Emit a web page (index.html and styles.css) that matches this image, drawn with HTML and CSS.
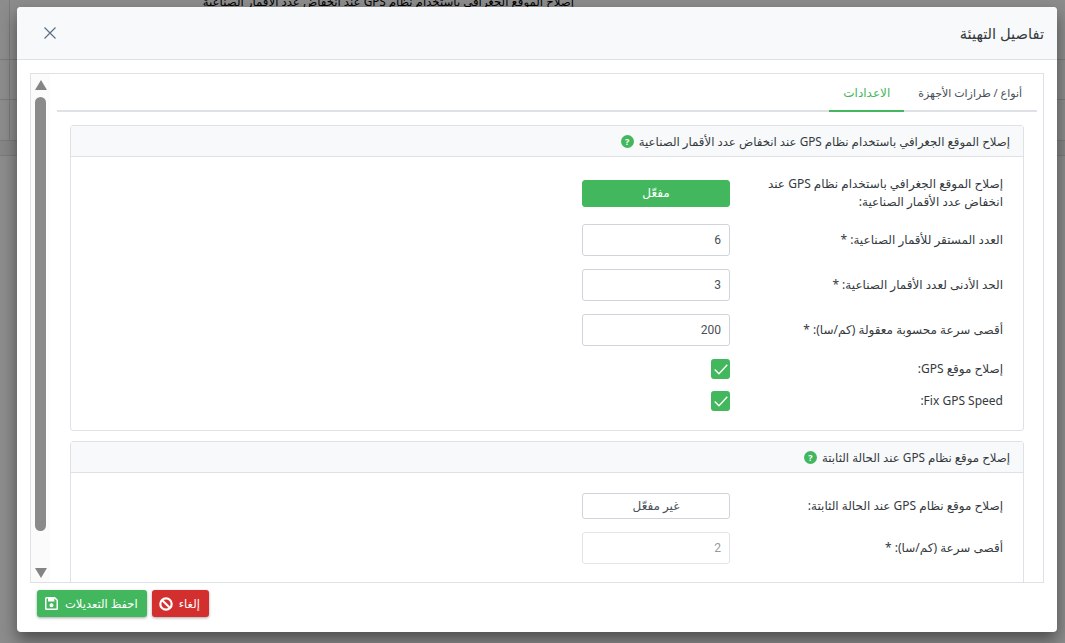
FILE: index.html
```html
<!DOCTYPE html>
<html lang="ar" dir="rtl">

<head>
    <meta charset="UTF-8">
    <title>تفاصيل التهيئة</title>
    <link rel="stylesheet" href="styles.css">
</head>

<body>
    <!-- الصفحة خلف النافذة -->
    <div class="page-behind">
        <div class="behind-row behind-first">
            <span class="behind-text">إصلاح الموقع الجغرافي باستخدام نظام GPS عند انخفاض عدد الأقمار الصناعية</span>
        </div>
        <div class="behind-row behind-second"></div>
        <div class="behind-row behind-third"></div>
        <div class="behind-row behind-fourth"></div>
    </div>
    <div class="overlay"></div>

    <div class="modal">
        <div class="modal-header">
            <span class="modal-title">تفاصيل التهيئة</span>
            <svg class="close-icon" width="12" height="12" viewBox="0 0 12 12"><path d="M.5 .5L11.500 11.500M11.500 .5L.5 11.500" stroke="#5b7085" stroke-width="1.200" fill="none"/></svg>
        </div>
        <div class="modal-body">
            <div class="frame">
                <div class="frame-content">
                    <div class="tabs">
                        <span class="tab">أنواع / طرازات الأجهزة</span>
                        <span class="tab tab-active">الاعدادات</span>
                    </div>

                    <div class="panel">
                        <div class="panel-head">
                            <span>إصلاح الموقع الجغرافي باستخدام نظام GPS عند انخفاض عدد الأقمار الصناعية</span>
                            <span class="help">?</span>
                        </div>
                        <div class="panel-body">
                            <div class="row">
                                <label class="row-label">إصلاح الموقع الجغرافي باستخدام نظام GPS عند انخفاض عدد الأقمار الصناعية:</label>
                                <div class="btn-toggle on">مفعّل</div>
                            </div>
                            <div class="row">
                                <label class="row-label">العدد المستقر للأقمار الصناعية: *</label>
                                <div class="field">6</div>
                            </div>
                            <div class="row">
                                <label class="row-label">الحد الأدنى لعدد الأقمار الصناعية: *</label>
                                <div class="field">3</div>
                            </div>
                            <div class="row">
                                <label class="row-label">أقصى سرعة محسوبة معقولة (كم/سا): *</label>
                                <div class="field">200</div>
                            </div>
                            <div class="row row-check">
                                <label class="row-label">إصلاح موقع GPS:</label>
                                <div class="check-wrap"><span class="check"><svg width="14" height="11" viewBox="0 0 14 11"><path d="M.7 5.500L5 9.800L13.300 .8" stroke="#fff" stroke-width="1.300" fill="none"/></svg></span></div>
                            </div>
                            <div class="row row-check">
                                <label class="row-label">Fix GPS Speed:</label>
                                <div class="check-wrap"><span class="check"><svg width="14" height="11" viewBox="0 0 14 11"><path d="M.7 5.500L5 9.800L13.300 .8" stroke="#fff" stroke-width="1.300" fill="none"/></svg></span></div>
                            </div>
                        </div>
                    </div>

                    <div class="panel panel-second">
                        <div class="panel-head">
                            <span>إصلاح موقع نظام GPS عند الحالة الثابتة</span>
                            <span class="help">?</span>
                        </div>
                        <div class="panel-body">
                            <div class="row">
                                <label class="row-label">إصلاح موقع نظام GPS عند الحالة الثابتة:</label>
                                <div class="btn-toggle off">غير مفعّل</div>
                            </div>
                            <div class="row">
                                <label class="row-label">أقصى سرعة (كم/سا): *</label>
                                <div class="field disabled">2</div>
                            </div>
                        </div>
                    </div>
                </div>

                <!-- شريط التمرير -->
                <div class="scrollbar">
                    <span class="arrow-up"></span>
                    <span class="thumb"></span>
                    <span class="arrow-down"></span>
                </div>
            </div>
        </div>
        <div class="modal-footer">
            <button class="btn btn-red">
                إلغاء
                <svg width="14" height="14" viewBox="0 0 14 14"><circle cx="7" cy="7" r="5.700" stroke="#fff" stroke-width="2.200" fill="none"/><path d="M3 3L11 11" stroke="#fff" stroke-width="2.200"/></svg>
            </button>
            <button class="btn btn-green">
                احفظ التعديلات
                <svg width="13" height="13" viewBox="0 0 13 13"><path fill-rule="evenodd" fill="#fff" d="M1.500 0H10L13 3V11.500A1.500 1.500 0 0 1 11.500 13H1.500A1.500 1.500 0 0 1 0 11.500V1.500A1.500 1.500 0 0 1 1.500 0ZM1.500 1.500V11.500H11.500V3.600L9.400 1.500V4.500H3V1.500ZM6.500 6.200A2 2 0 1 0 6.500 10.200A2 2 0 1 0 6.500 6.200Z"/></svg>
            </button>
        </div>
    </div>
</body>

</html>
```

FILE: styles.css
```css
* {
    box-sizing: border-box;
}

html,
body {
    height: 100%;
    margin: 0;
}

body {
    position: relative;
    overflow: hidden;
    background-color: #fff;
    font-family: "Noto Sans", "DejaVu Sans", sans-serif;
    font-size: 12px;
    color: #343a40;
}

.page-behind {
    height: 100%;
    background: linear-gradient(#dedede, #dedede) 9px 0 / 1px 147px no-repeat;
}

.behind-row {
    border-bottom: 1px solid #dedede;
}

.behind-first {
    height: 67px;
    padding-right: 491px;
}

.behind-second {
    height: 40px;
}

.behind-third {
    height: 41px;
}

.behind-fourth {
    height: 15px;
    background-color: #f4f4f4;
}

.behind-text {
    display: block;
    margin-top: -7px;
    font-size: 11.750px;
    color: #000;
}

.overlay {
    position: absolute;
    top: 0;
    left: 0;
    width: 100%;
    height: 100%;
    background-color: rgba(0, 0, 0, .45);
}

.modal {
    position: absolute;
    top: 7px;
    left: 17px;
    width: 1040px;
    height: 625px;
    display: flex;
    flex-direction: column;
    background-color: #fff;
    border-radius: 4px;
    box-shadow: 0 8px 16px rgba(0, 0, 0, .45);
}

.modal-header {
    height: 53px;
    flex-shrink: 0;
    display: flex;
    align-items: center;
    justify-content: space-between;
    padding: 0 13px 0 27px;
    background-color: #f8f9fa;
    border-bottom: 1px solid #dee2e6;
    border-radius: 4px 4px 0 0;
}

.modal-title {
    font-size: 14.700px;
}

.modal-body {
    height: 523px;
    padding: 13px 13px 0;
}

.frame {
    display: flex;
    height: 510px;
    overflow: hidden;
    border: 1px solid #dee2e6;
}

.frame-content {
    flex: 1;
    padding: 0 6px 0 7px;
    overflow: hidden;
}

.tabs {
    display: flex;
    height: 38px;
    margin-bottom: 13px;
    border-bottom: 2px solid #dee2e6;
}

.tab {
    padding: 11px 15px 0 14px;
    font-size: 11px;
    color: #495057;
}

.tab-active {
    height: 38px;
    padding: 10px 14px 0;
    font-size: 12px;
    color: #43b75d;
    border-bottom: 2px solid #43b75d;
}

.panel {
    margin: 0 13px 10px;
    border: 1px solid #dee2e6;
    border-radius: 3px;
}

.panel-head {
    height: 31px;
    display: flex;
    align-items: center;
    gap: 5px;
    padding: 0 13px;
    font-size: 11.750px;
    background-color: #f8f9fa;
    border-bottom: 1px solid #dee2e6;
}

.panel-body {
    padding: 18px 20px 0;
    height: 273px;
}

.panel-second .panel-body {
    padding-top: 20px;
    height: 120px;
}

.row {
    display: flex;
    align-items: center;
    margin-bottom: 13px;
}

.row-check {
    margin-bottom: 12px;
}

.row-label {
    width: 273px;
    line-height: 18px;
}

.field,
.btn-toggle {
    width: 148px;
    height: 32px;
    padding: 0 8px;
    line-height: 30px;
    border: 1px solid #ced4da;
    border-radius: 3px;
    color: #495057;
    font-family: Roboto, "Noto Sans", "DejaVu Sans", sans-serif;
    text-align: right;
}

.field.disabled {
    color: #999;
    border-color: #e2e5e8;
}

.btn-toggle {
    height: 26px;
    line-height: 24px;
    text-align: center;
}

.btn-toggle.on {
    height: 27px;
    line-height: 25px;
    background-color: #43b75d;
    border-color: #43b75d;
    color: #fff;
}

.check-wrap {
    width: 148px;
    display: flex;
}

.check {
    width: 19px;
    height: 20px;
    display: flex;
    align-items: center;
    justify-content: center;
    background-color: #43b75d;
    border-radius: 3px;
}

.help {
    width: 13px;
    height: 13px;
    border-radius: 50%;
    background-color: #43b75d;
    color: #fff;
    font-size: 9px;
    font-weight: bold;
    line-height: 13px;
    text-align: center;
}

.scrollbar {
    width: 19px;
    flex-shrink: 0;
    display: flex;
    flex-direction: column;
    align-items: center;
    background-color: #fbfbfb;
}

.arrow-up {
    margin-top: 6px;
    border-left: 6.500px solid transparent;
    border-right: 6.500px solid transparent;
    border-bottom: 10px solid #848484;
}

.thumb {
    width: 11px;
    height: 434px;
    margin: 7px 0 37px;
    border-radius: 6px;
    background-color: #8a8a8a;
}

.arrow-down {
    border-left: 6.500px solid transparent;
    border-right: 6.500px solid transparent;
    border-top: 10px solid #848484;
}

.modal-footer {
    flex: 1;
    display: flex;
    align-items: flex-start;
    justify-content: flex-end;
    gap: 5px;
    padding: 7px 20px 0;
}

.btn {
    height: 27px;
    display: flex;
    align-items: center;
    gap: 6px;
    padding: 0 9px 0 7px;
    border: none;
    border-radius: 3px;
    color: #fff;
    font-family: inherit;
    font-size: 11.500px;
    box-shadow: 0 1px 3px rgba(0, 0, 0, .35);
}

.btn-red {
    background-color: #d32f2f;
}

.btn-green {
    gap: 7px;
    padding-left: 8px;
    background-color: #43b75d;
}
```
